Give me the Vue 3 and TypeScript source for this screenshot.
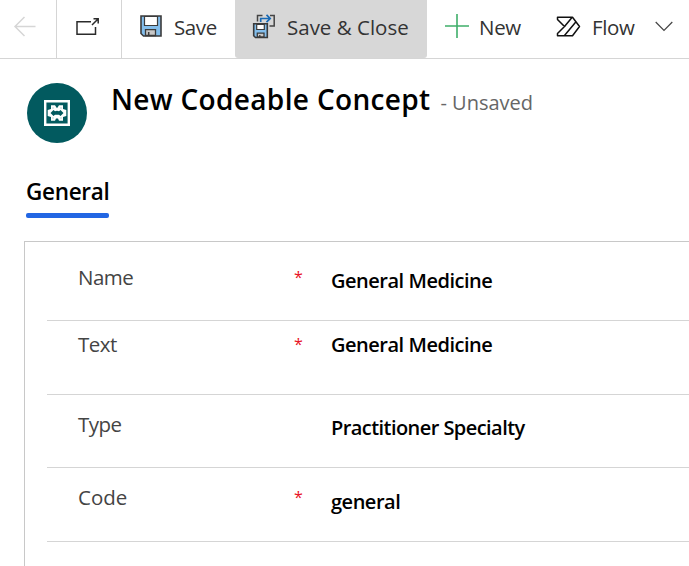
<script setup lang="ts">
interface Field {
  key: string
  label: string
  value: string
  required: boolean
}

const fields: Field[] = [
  { key: 'name', label: 'Name', value: 'General Medicine', required: true },
  { key: 'text', label: 'Text', value: 'General Medicine', required: true },
  { key: 'type', label: 'Type', value: 'Practitioner Specialty', required: false },
  { key: 'code', label: 'Code', value: 'general', required: true },
]
</script>

<template>
  <div class="page">
    <header class="bar">
      <button class="cmd back" aria-label="Back">
        <svg width="24" height="22" viewBox="0 0 24 22" fill="none" stroke="#d6d6d6" stroke-width="1.5">
          <path d="M22.5 11.5H2.5M11.5 2L2 11.500l9.500 9.500" />
        </svg>
      </button>
      <button class="cmd popout" aria-label="Open in new window">
        <svg width="26" height="20" viewBox="0 0 26 20" fill="none" stroke="#2b2b2b" stroke-width="1.500">
          <path d="M16 4.700H2V17.300H20.500V10" />
          <path d="M17 8L23 2M18.500 1.800H23.200V6.500" />
        </svg>
      </button>
      <button class="cmd save">
        <svg width="22" height="22" viewBox="0 0 22 22">
          <path d="M1 1H21V21H3.500L1 18.500Z" fill="#83beec" stroke="#3b3b3b" stroke-width="1.600" />
          <path d="M4.500 1.500H17.500V10.500H4.500Z" fill="#fff" stroke="#3b3b3b" stroke-width="1.200" />
          <path d="M5.500 20.500V14.700H15.500V20.500Z" fill="#c8c8c8" stroke="#3b3b3b" stroke-width="1.300" />
          <path d="M8.700 17V20.500" stroke="#3b3b3b" stroke-width="1.500" />
        </svg>
        <span>Save</span>
      </button>
      <button class="cmd close">
        <svg width="24" height="26" viewBox="0 0 24 26" fill="none">
          <path d="M5.500 8.500V2.500H10.500M18 2.500H22.200V13H17.500" stroke="#444" stroke-width="1.500" />
          <path d="M8.700 9V5.500H17.500M14.500 1.800L18.200 5.500l-3.700 3.700" stroke="#1769b5" stroke-width="1.700" />
          <path d="M1.700 10.800H15.300V24.500H3.500L1.700 22.700Z" fill="#83beec" stroke="#3b3b3b" stroke-width="1.600" />
          <path d="M4.700 11.300H12.300V16.500H4.700Z" fill="#fff" stroke="#3b3b3b" stroke-width="1.200" />
          <path d="M5.300 24V20.200H12V24Z" fill="#c8c8c8" stroke="#3b3b3b" stroke-width="1.300" />
          <path d="M7.800 22V24" stroke="#3b3b3b" stroke-width="1.300" />
        </svg>
        <span>Save &amp; Close</span>
      </button>
      <button class="cmd new">
        <svg width="24" height="24" viewBox="0 0 24 24" stroke="#3fae6a" stroke-width="1.600">
          <path d="M0 12H24M12 0V24" />
        </svg>
        <span>New</span>
      </button>
      <button class="cmd flow">
        <svg width="25" height="21" viewBox="0 0 25 21" fill="none" stroke="#111" stroke-width="1.500" stroke-linejoin="round">
          <path d="M1.500 1.300H16.500L23.500 10.500L16.500 19.700H1.500V17.500L8.500 10.500L1.500 3.500Z" />
          <path d="M8.500 10.500L16 1.500M8.500 19.500L20 5.800" />
        </svg>
        <span>Flow</span>
        <svg class="chevron" width="18" height="11" viewBox="0 0 18 11" fill="none" stroke="#444" stroke-width="1.200">
          <path d="M.7 1L9 9.500L17.300 1" />
        </svg>
      </button>
    </header>

    <section class="heading">
      <div class="avatar">
        <svg width="26" height="26" viewBox="0 0 26 26" fill="none">
          <path d="M1.200 1.200H24.800V24.800H1.200Z" stroke="#fff" stroke-width="2.400" />
          <path d="M7 5.300H11L13 8.300L15 5.300H19V9L22.300 10V16L19 17V20.700H15L14 18.500H12L11 20.700H7V17L3.700 16V10L7 9Z" fill="#fff" />
          <path d="M6.500 13L9.500 10L11 11.300L13 10.800L15 11.300L16.500 10L19.500 13L16.500 16L15 14.800H11L9.500 16Z" fill="#025a5f" />
          <path d="M9 7V9M17 7V9M9 17V19M17 17V19" stroke="#025a5f" stroke-opacity=".25" />
        </svg>
      </div>
      <h1 class="title">New Codeable Concept</h1>
      <span class="state">- Unsaved</span>
    </section>

    <nav class="tabs">
      <a class="tab">General</a>
    </nav>

    <main class="card">
      <div v-for="f in fields" :key="f.key" class="row" :class="f.key">
        <span class="label">{{ f.label }}</span>
        <span class="mark">{{ f.required ? '*' : '' }}</span>
        <span class="value">{{ f.value }}</span>
      </div>
    </main>
  </div>
</template>

<style>
body {
  background: #fff;
  overflow: hidden;
}
</style>

<style scoped>
.page {
  width: 689px;
  height: 566px;
  overflow: hidden;
  display: flex;
  flex-direction: column;
  background: #fff;
  font-family: "Open Sans", "Noto Sans", sans-serif;
  color: #000;
}
.page * {
  box-sizing: border-box;
}
svg {
  display: block;
  flex: none;
}
.bar {
  display: flex;
  flex: none;
  height: 59px;
  border-bottom: 1px solid #d5d5d5;
}
.cmd {
  display: flex;
  flex: none;
  align-items: center;
  height: 58px;
  padding: 0 0 6px;
  border: 0;
  background: none;
  font: 400 20.5px/30px "Open Sans", "Noto Sans", sans-serif;
  color: #333;
  white-space: nowrap;
}
.cmd span {
  padding-top: 1px;
}
.back {
  width: 57px;
  padding-left: 13px;
  border-right: 1px solid #d5d5d5;
}
.popout {
  width: 65px;
  padding-left: 18px;
  padding-bottom: 5px;
  border-right: 1px solid #d5d5d5;
}
.save {
  width: 113px;
  padding-left: 18px;
  gap: 12px;
  letter-spacing: -0.4px;
}
.close {
  width: 192px;
  padding-left: 17px;
  gap: 11px;
  background: #d7d7d7;
  border-radius: 0 0 3px 3px;
}
.new {
  width: 128px;
  padding-left: 18px;
  gap: 10px;
  letter-spacing: -0.3px;
}
.flow {
  padding-left: 1px;
  gap: 11px;
  letter-spacing: -0.4px;
}
.chevron {
  margin-left: 10px;
}
.heading {
  display: flex;
  flex: none;
  align-items: baseline;
  height: 117px;
  padding: 20px 0 0 27px;
}
.avatar {
  display: flex;
  align-items: center;
  justify-content: center;
  align-self: flex-start;
  width: 60px;
  height: 60px;
  margin-top: 4px;
  border-radius: 50%;
  background: #025a5f;
}
.title {
  margin: 0 0 0 24px;
  font-size: 28px;
  line-height: 40px;
  font-weight: 600;
  letter-spacing: 0.34px;
}
.state {
  margin-left: 10px;
  font-size: 20px;
  color: #666;
}
.tabs {
  display: flex;
  flex: none;
  height: 65px;
  padding-left: 26px;
}
.tab {
  height: 42px;
  width: 83px;
  padding-top: 1px;
  font-size: 22.5px;
  line-height: 30px;
  font-weight: 600;
  letter-spacing: -0.3px;
  white-space: nowrap;
}
.tab::after {
  content: "";
  display: block;
  height: 5px;
  margin-top: 6px;
  border-radius: 2px;
  background: #2266e3;
}
.card {
  flex: 1;
  margin-left: 24px;
  padding-left: 22px;
  border-top: 1px solid #c8c8c8;
  border-left: 1px solid #c8c8c8;
}
.row {
  display: grid;
  grid-template-columns: 216px 37px 1fr;
  align-items: start;
  height: 74px;
  padding: 14px 0 0 31px;
  border-bottom: 1px solid #d5d5d5;
  font-size: 20.5px;
  line-height: 30px;
}
.row.name {
  height: 79px;
  padding-top: 20px;
}
.row.text {
  padding-top: 8px;
}
.row.type {
  height: 73px;
}
.label {
  color: #444;
  letter-spacing: -0.5px;
}
.code .label {
  letter-spacing: 0;
}
.mark {
  color: #e81123;
  font-size: 16px;
}
.value {
  padding-top: 4px;
  font-size: 20px;
  font-weight: 600;
  letter-spacing: -0.48px;
}
.text .value {
  padding-top: 1px;
}
.type .value {
  letter-spacing: -0.56px;
}
.code .value {
  padding-top: 5px;
}
</style>
